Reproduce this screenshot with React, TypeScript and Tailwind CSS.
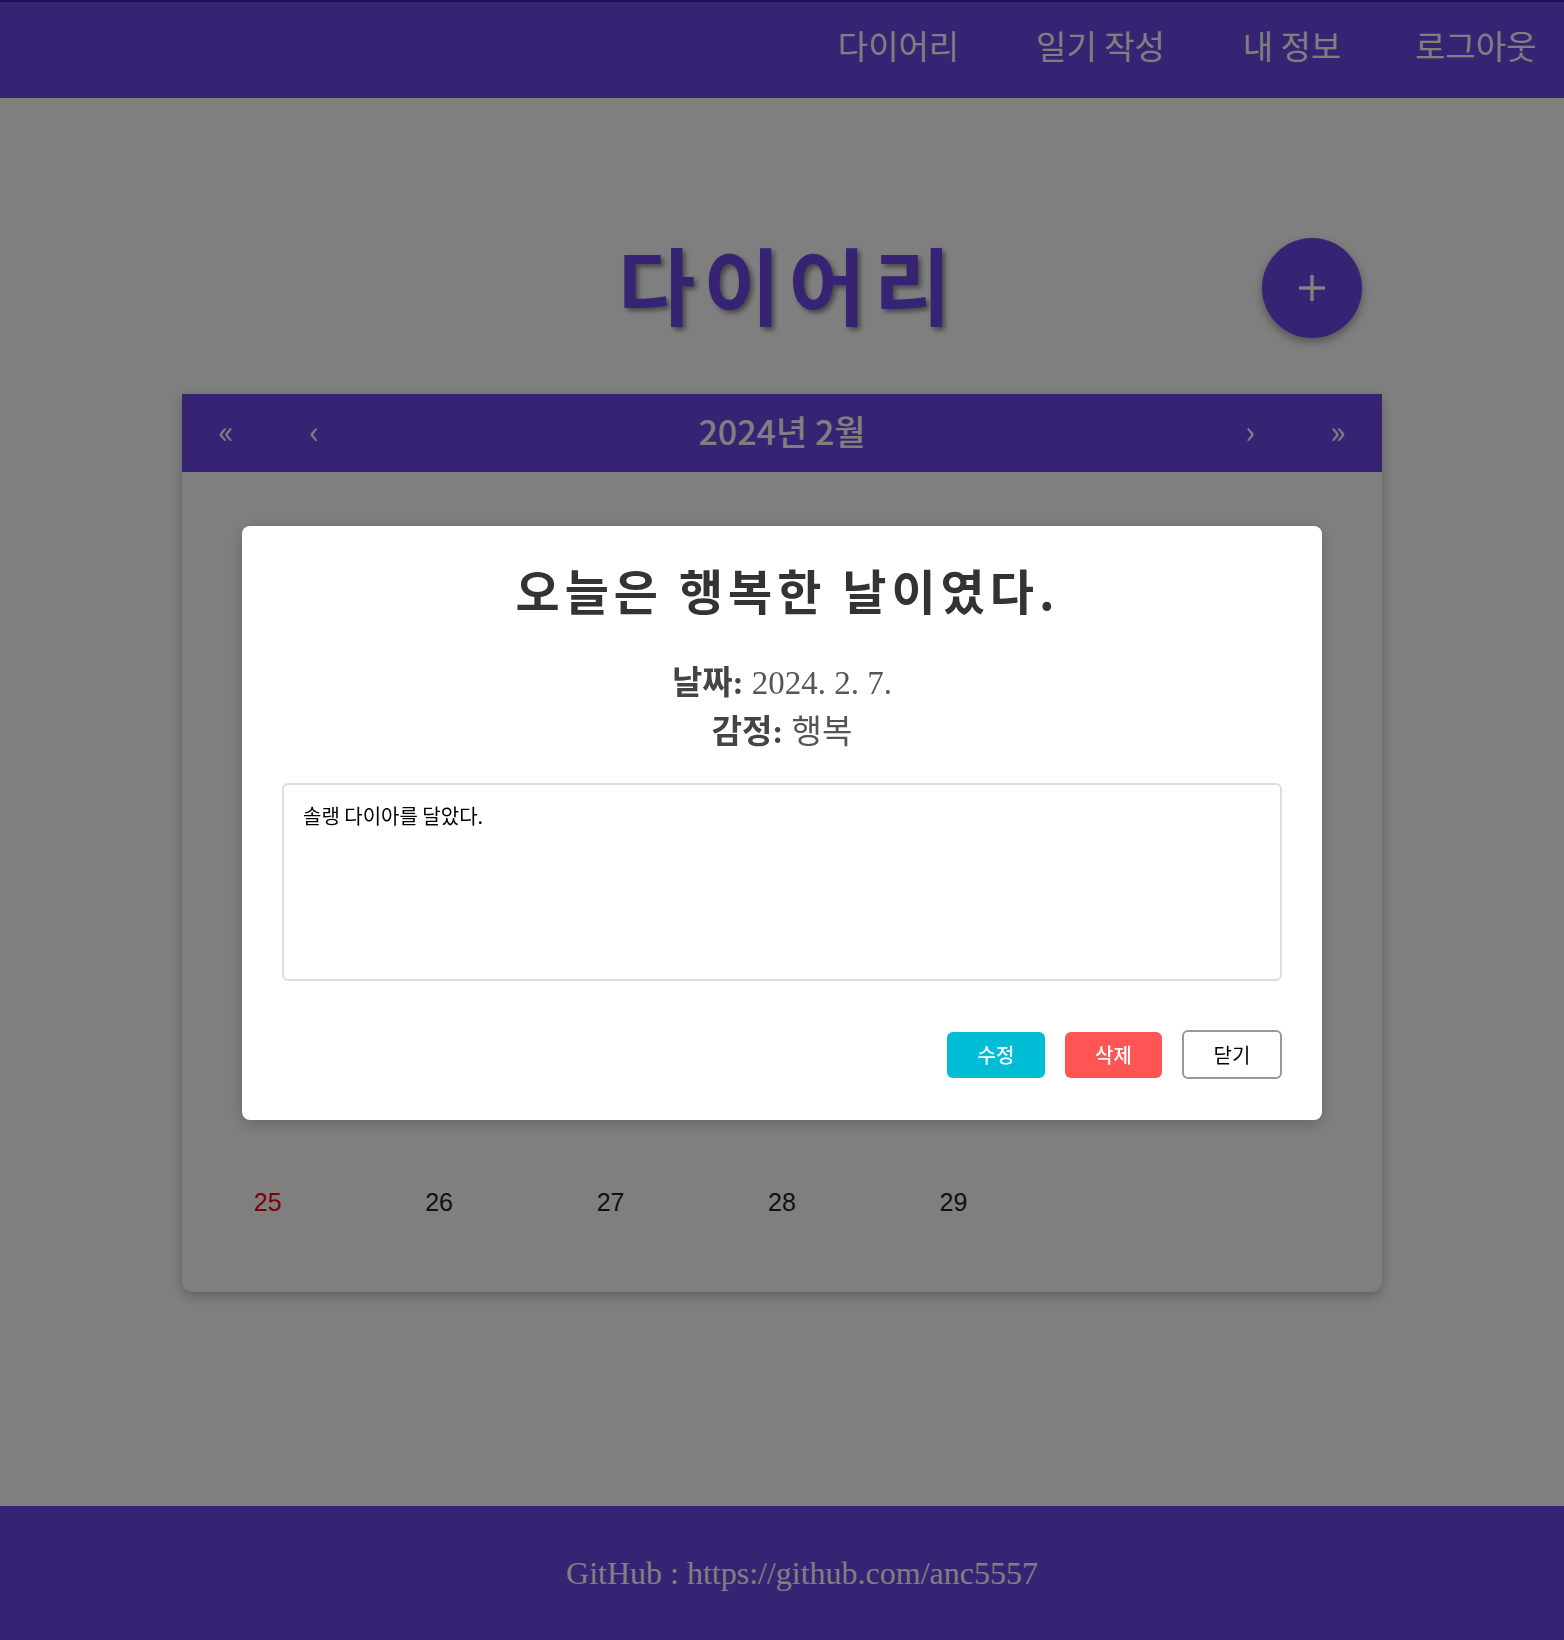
import React from 'react';

const weeks: (number | null)[][] = [
  [null, null, null, null, 1, 2, 3],
  [4, 5, 6, 7, 8, 9, 10],
  [11, 12, 13, 14, 15, 16, 17],
  [18, 19, 20, 21, 22, 23, 24],
  [25, 26, 27, 28, 29, null, null],
];

const navItems = [
  { label: '다이어리', w: 'w-[131px]' },
  { label: '일기 작성', w: 'w-[137px]' },
  { label: '내 정보', w: 'w-[110px]' },
  { label: '로그아웃', w: 'w-[117px]' },
];

function Header() {
  return (
    <header className="h-[98px] shrink-0 border-t-2 border-[#3a1fa6] bg-[#6e46e6] flex items-center justify-end gap-[68px] pr-[32px] pb-[8px] font-['Noto_Sans_CJK_KR',sans-serif] text-[33px] text-white">
      {navItems.map((item) => (
        <a key={item.label} className={`${item.w} text-center cursor-pointer whitespace-nowrap`}>
          {item.label}
        </a>
      ))}
    </header>
  );
}

function Calendar() {
  return (
    <div className="w-[1200px] mx-auto mt-[56px] rounded-b-[10px] bg-white shadow-[0_4px_12px_rgba(0,0,0,0.25)]">
      <div className="h-[78px] pb-[6px] bg-[#6e46e6] flex items-center text-white font-['Noto_Sans_CJK_KR',sans-serif]">
        <button className="w-[88px] text-[32px]">«</button>
        <button className="w-[88px] text-[32px]">‹</button>
        <div className="flex-1 text-center text-[34px] font-medium">2024년 2월</div>
        <button className="w-[88px] text-[32px]">›</button>
        <button className="w-[88px] text-[32px]">»</button>
      </div>
      <div className="pt-[56px] pb-[14px] font-['Liberation_Sans',Arial,sans-serif] text-[25px]">
        {weeks.map((week, i) => (
          <div key={i} className="grid grid-cols-7 h-[150px]">
            {week.map((d, j) => (
              <div
                key={j}
                className={`flex items-center justify-center ${j === 0 ? 'text-[#ff0000]' : 'text-[#222]'}`}
              >
                {d ?? ''}
              </div>
            ))}
          </div>
        ))}
      </div>
    </div>
  );
}

function DiaryModal() {
  return (
    <div className="fixed inset-0 pt-[6px] bg-black/50 flex items-center justify-center">
      <div className="w-[1080px] bg-white rounded-[8px] px-[40px] pt-[31px] pb-[41px] shadow-[0_4px_16px_rgba(0,0,0,0.2)]">
        <h2 className="pl-[11px] text-center text-[48px] leading-[64px] font-bold tracking-[5px] text-[#333] font-['Noto_Sans_CJK_KR',sans-serif]">
          오늘은 행복한 날이였다.
        </h2>
        <div className="mt-[38px] text-center text-[33px] leading-[49px] text-[#555] font-['Liberation_Serif','Noto_Sans_CJK_KR',serif]">
          <p>
            <b className="text-[#444]">날짜:</b> 2024. 2. 7.
          </p>
          <p>
            <b className="text-[#444]">감정:</b> 행복
          </p>
        </div>
        <textarea
          readOnly
          defaultValue="솔랭 다이아를 달았다."
          className="block mt-[26px] w-full h-[198px] border-2 border-[#ddd] rounded-[6px] pt-[16px] px-[19px] text-[20px] leading-[30px] text-black resize-none outline-none font-['Noto_Sans_CJK_KR',sans-serif]"
        />
        <div className="mt-[49px] h-[49px] flex items-center justify-end gap-[20px] font-['Noto_Sans_CJK_KR',sans-serif] text-[20px]">
          <button className="w-[98px] h-[46px] rounded-[6px] bg-[#00bcd4] text-white font-medium">수정</button>
          <button className="w-[97px] h-[46px] rounded-[6px] bg-[#ff5555] text-white font-medium">삭제</button>
          <button className="w-[100px] h-[49px] rounded-[6px] border-2 border-[#999] bg-white text-black">닫기</button>
        </div>
      </div>
    </div>
  );
}

export default function App() {
  return (
    <div className="min-h-screen flex flex-col bg-white">
      <Header />
      <main className="flex-1 pt-[140px]">
        <div className="w-[1200px] mx-auto h-[100px] grid grid-cols-[1fr_auto_1fr] items-center">
          <div />
          <h1 className="pl-[13px] pb-[11px] text-[84px] leading-none font-bold tracking-[8px] text-[#6e46e6] font-['Noto_Sans_CJK_KR',sans-serif] [text-shadow:3px_3px_5px_rgba(0,0,0,0.45)]">
            다이어리
          </h1>
          <button className="justify-self-end mr-[20px] w-[100px] h-[100px] rounded-full bg-[#6e46e6] flex items-center justify-center shadow-[0_4px_10px_rgba(0,0,0,0.35)]">
            <svg width="28" height="28" viewBox="0 0 28 28" fill="none" stroke="white" strokeWidth="3.5">
              <path d="M14 1v26M1 14h26" />
            </svg>
          </button>
        </div>
        <Calendar />
      </main>
      <footer className="h-[134px] shrink-0 pl-[40px] bg-[#6e46e6] flex items-center justify-center text-[32px] text-white font-['Liberation_Serif',serif]">
        GitHub : https://github.com/anc5557
      </footer>
      <DiaryModal />
    </div>
  );
}
